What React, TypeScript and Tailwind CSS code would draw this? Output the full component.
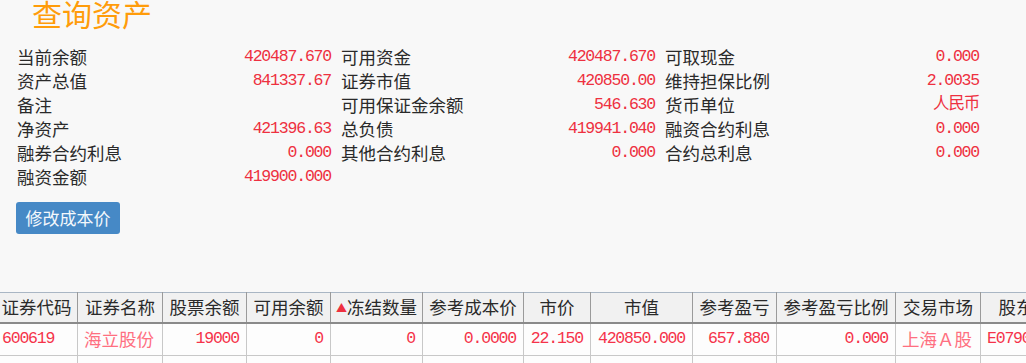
import React from "react";

const CJK = '"Noto Sans CJK SC", "Noto Sans", sans-serif';
const MONO = '"Liberation Mono", "Noto Sans CJK SC", monospace';

type Cell = { label: string; value: string } | null;

const rows: Cell[][] = [
  [
    { label: "当前余额", value: "420487.670" },
    { label: "可用资金", value: "420487.670" },
    { label: "可取现金", value: "0.000" },
  ],
  [
    { label: "资产总值", value: "841337.67" },
    { label: "证券市值", value: "420850.00" },
    { label: "维持担保比例", value: "2.0035" },
  ],
  [
    { label: "备注", value: "" },
    { label: "可用保证金余额", value: "546.630" },
    { label: "货币单位", value: "人民币" },
  ],
  [
    { label: "净资产", value: "421396.63" },
    { label: "总负债", value: "419941.040" },
    { label: "融资合约利息", value: "0.000" },
  ],
  [
    { label: "融券合约利息", value: "0.000" },
    { label: "其他合约利息", value: "0.000" },
    { label: "合约总利息", value: "0.000" },
  ],
  [{ label: "融资金额", value: "419900.000" }, null, null],
];

const widths = [82, 85, 84, 84, 92, 101, 67, 102, 84, 119, 85, 106];
const headers = [
  "证券代码",
  "证券名称",
  "股票余额",
  "可用余额",
  "冻结数量",
  "参考成本价",
  "市价",
  "市值",
  "参考盈亏",
  "参考盈亏比例",
  "交易市场",
  "股东代码",
];
const body: { v: string; align: "l" | "r"; cjk?: boolean }[] = [
  { v: "600619", align: "l" },
  { v: "海立股份", align: "l", cjk: true },
  { v: "19000", align: "r" },
  { v: "0", align: "r" },
  { v: "0", align: "r" },
  { v: "0.0000", align: "r" },
  { v: "22.150", align: "r" },
  { v: "420850.000", align: "r" },
  { v: "657.880", align: "r" },
  { v: "0.000", align: "r" },
  { v: "上海Ａ股", align: "l", cjk: true },
  { v: "E079043526", align: "l" },
];

export default function App() {
  return (
    <div className="w-[1026px] h-[363px] overflow-hidden bg-[#f8f8f8] text-[#333]">
      <div
        className="-mt-[2px] ml-[32px] h-[30px] text-[30px] leading-[30px] text-[#ff9c0a]"
        style={{ fontFamily: CJK }}
      >
        查询资产
      </div>

      <div className="mt-[17px] ml-[17px] grid grid-cols-[324px_324px_324px]">
        {rows.map((r, i) =>
          r.map((c, j) => (
            <div key={`${i}-${j}`} className="h-[24px] flex items-center justify-between pr-[10px]">
              {c && (
                <>
                  <span className="text-[17.5px] leading-[24px] text-[#2a2a2a]" style={{ fontFamily: CJK }}>
                    {c.label}
                  </span>
                  <span
                    className="text-[16.5px] leading-[24px] tracking-[-1.2px] text-[#ee3040]"
                    style={{ fontFamily: MONO }}
                  >
                    {c.value}
                  </span>
                </>
              )}
            </div>
          ))
        )}
      </div>

      <div className="mt-[13px] ml-[16px]">
        <button
          className="w-[104px] h-[32px] rounded-[3px] bg-[#4689c6] text-[17px] leading-[32px] text-[#f4f8fc]"
          style={{ fontFamily: CJK }}
        >
          修改成本价
        </button>
      </div>

      <div className="mt-[58px] overflow-hidden">
        <table className="-ml-[5px] table-fixed border-collapse" style={{ width: widths.reduce((a, b) => a + b, 0) }}>
          <colgroup>
            {widths.map((w, i) => (
              <col key={i} style={{ width: w }} />
            ))}
          </colgroup>
          <thead>
            <tr className="h-[30px] bg-[#f1f1f1] border-t border-t-[#a9b6c4] border-b-2 border-b-[#8a8a8a]">
              {headers.map((h, i) => (
                <th
                  key={i}
                  className="border-x border-x-[#9a9a9a] px-0 text-center font-normal text-[17.5px] leading-[28px] text-[#2a2a2a] whitespace-nowrap overflow-hidden"
                  style={{ fontFamily: CJK }}
                >
                  {i === 4 && <span className="text-[#ee3040] text-[11px] align-[2px]">▲</span>}
                  {h}
                </th>
              ))}
            </tr>
          </thead>
          <tbody>
            <tr className="h-[33px] bg-[#fdfdfd] border-b border-b-[#c8c8c8]">
              {body.map((c, i) => (
                <td
                  key={i}
                  className={`border-x border-x-[#c8c8c8] whitespace-nowrap overflow-hidden ${
                    c.align === "l" ? "text-left pl-[6px]" : "text-right pr-[7px]"
                  } ${c.cjk ? "text-[17.5px] text-[#ff6f80]" : "text-[16.5px] tracking-[-1.2px] text-[#f5334a]"}`}
                  style={{ fontFamily: c.cjk ? CJK : MONO }}
                >
                  {c.v}
                </td>
              ))}
            </tr>
            <tr className="h-[33px] bg-[#fdfdfd]">
              {body.map((_, i) => (
                <td key={i} className="border-x border-x-[#c8c8c8]"></td>
              ))}
            </tr>
          </tbody>
        </table>
      </div>
    </div>
  );
}
